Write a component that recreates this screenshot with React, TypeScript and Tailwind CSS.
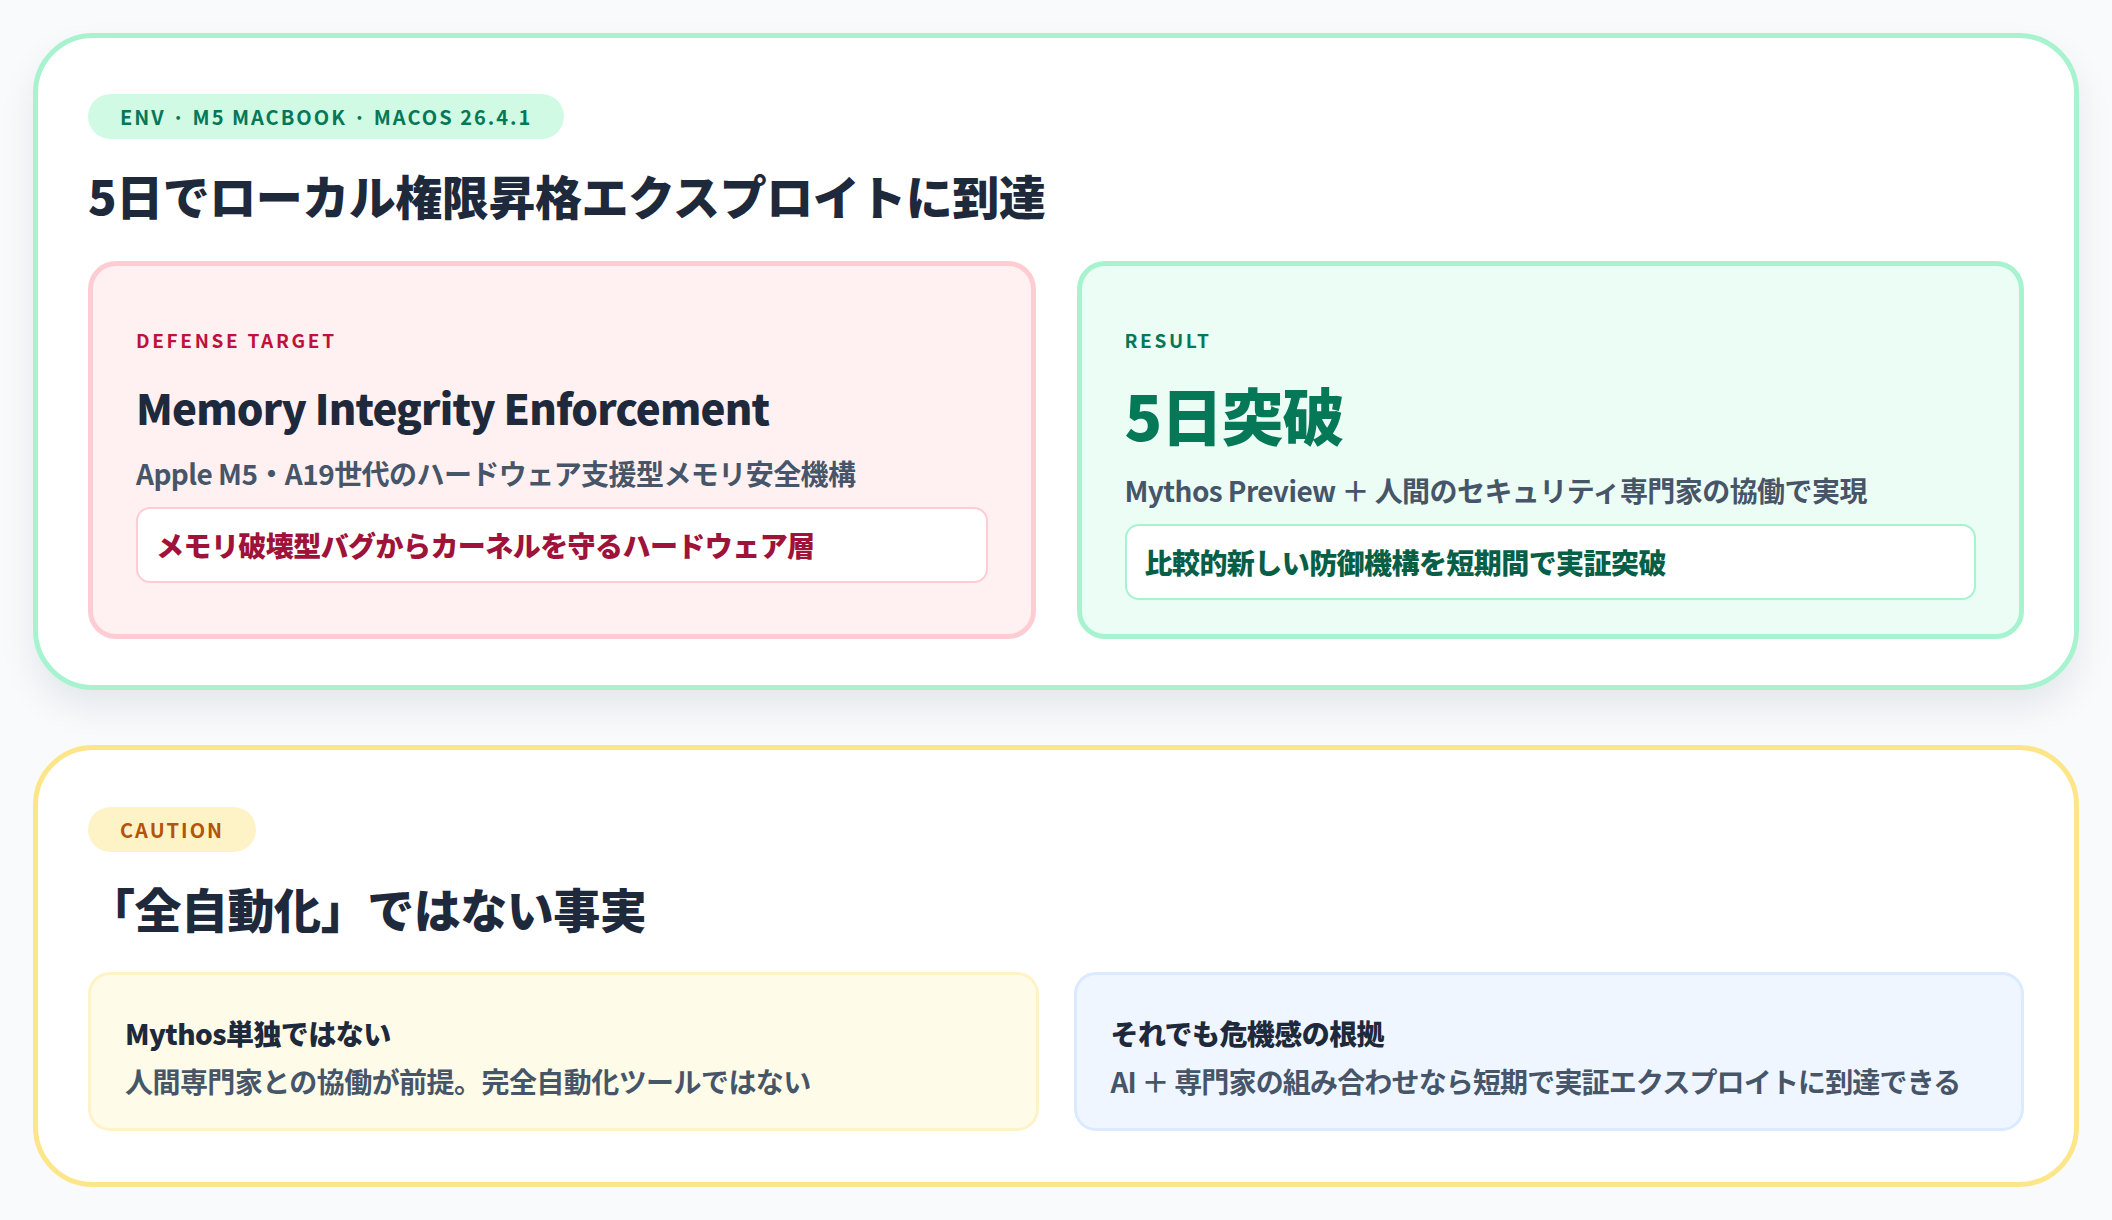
const font = { fontFamily: '"Noto Sans CJK JP", "Noto Sans", sans-serif' };

export default function App() {
  return (
    <div style={font} className="min-h-[1220px] w-[2112px] bg-[#f8fafc] px-[33px] pt-[33px] text-[#1e293b]">
      <section className="flex h-[657px] flex-col rounded-[60px] border-[5px] border-[#a7f3d0] bg-white px-[50px] pt-[56px] shadow-[0_18px_36px_rgba(15,23,42,0.08)]">
        <div className="flex">
          <span className="rounded-full bg-[#d1fae5] px-[32px] py-[8px] text-[20px] font-bold leading-[29px] tracking-[0.1em] text-[#047857]">
            ENV · M5 MACBOOK · MACOS 26.4.1
          </span>
        </div>
        <h1 className="mt-[22px] text-[47px] font-black leading-[68px] tracking-[-0.01em]">5日でローカル権限昇格エクスプロイトに到達</h1>
        <div className="mt-[32px] grid grid-cols-2 gap-[41px]">
          <div className="h-[378px] rounded-[28px] border-[5px] border-[#fecdd3] bg-[#fff1f2] px-[43px] pt-[62px]">
            <div className="text-[19px] font-bold leading-[24px] tracking-[0.14em] text-[#be123c]">DEFENSE TARGET</div>
            <div className="mt-[25px] text-[42px] font-black leading-[60px] tracking-[-0.02em]">Memory Integrity Enforcement</div>
            <div className="mt-[16px] text-[28px] font-bold leading-[40px] tracking-[-0.02em] text-[#475569]">Apple M5・A19世代のハードウェア支援型メモリ安全機構</div>
            <div className="mt-[14px] rounded-[14px] border-2 border-[#fecdd3] bg-white px-[18px] py-[14px] text-[28px] font-black leading-[44px] tracking-[-0.02em] text-[#9f1239]">
              メモリ破壊型バグからカーネルを守るハードウェア層
            </div>
          </div>
          <div className="h-[378px] rounded-[28px] border-[5px] border-[#a7f3d0] bg-[#ecfdf5] px-[43px] pt-[62px]">
            <div className="text-[19px] font-bold leading-[24px] tracking-[0.14em] text-[#047857]">RESULT</div>
            <div className="mt-[22px] text-[62px] font-black leading-[80px] tracking-[-0.02em] text-[#047857]">5日突破</div>
            <div className="mt-[16px] text-[28px] font-bold leading-[40px] tracking-[-0.02em] text-[#475569]">Mythos Preview ＋ 人間のセキュリティ専門家の協働で実現</div>
            <div className="mt-[14px] rounded-[14px] border-2 border-[#a7f3d0] bg-white px-[18px] py-[14px] text-[28px] font-black leading-[44px] tracking-[-0.02em] text-[#065f46]">
              比較的新しい防御機構を短期間で実証突破
            </div>
          </div>
        </div>
      </section>
      <section className="mt-[55px] flex h-[442px] flex-col rounded-[60px] border-[5px] border-[#fde68a] bg-white px-[50px] pt-[57px]">
        <div className="flex">
          <span className="rounded-full bg-[#fef3c7] px-[32px] py-[8px] text-[20px] font-bold leading-[29px] tracking-[0.1em] text-[#b45309]">
            CAUTION
          </span>
        </div>
        <h2 className="mt-[22px] text-[47px] font-black leading-[68px] tracking-[-0.01em]">「全自動化」ではない事実</h2>
        <div className="mt-[30px] grid grid-cols-2 gap-[35px]">
          <div className="h-[159px] rounded-[22px] border-[3px] border-[#fef3c7] bg-[#fefce8] px-[34px] pt-[38px]">
            <div className="text-[28px] font-black leading-[40px] tracking-[-0.02em]">Mythos単独ではない</div>
            <div className="mt-[8px] text-[28px] font-bold leading-[40px] tracking-[-0.02em] text-[#475569]">人間専門家との協働が前提。完全自動化ツールではない</div>
          </div>
          <div className="h-[159px] rounded-[22px] border-[3px] border-[#dbeafe] bg-[#eff6ff] px-[34px] pt-[38px]">
            <div className="text-[28px] font-black leading-[40px] tracking-[-0.02em]">それでも危機感の根拠</div>
            <div className="mt-[8px] whitespace-nowrap text-[28px] font-bold leading-[40px] tracking-[-0.03em] text-[#475569]">AI ＋ 専門家の組み合わせなら短期で実証エクスプロイトに到達できる</div>
          </div>
        </div>
      </section>
    </div>
  );
}
